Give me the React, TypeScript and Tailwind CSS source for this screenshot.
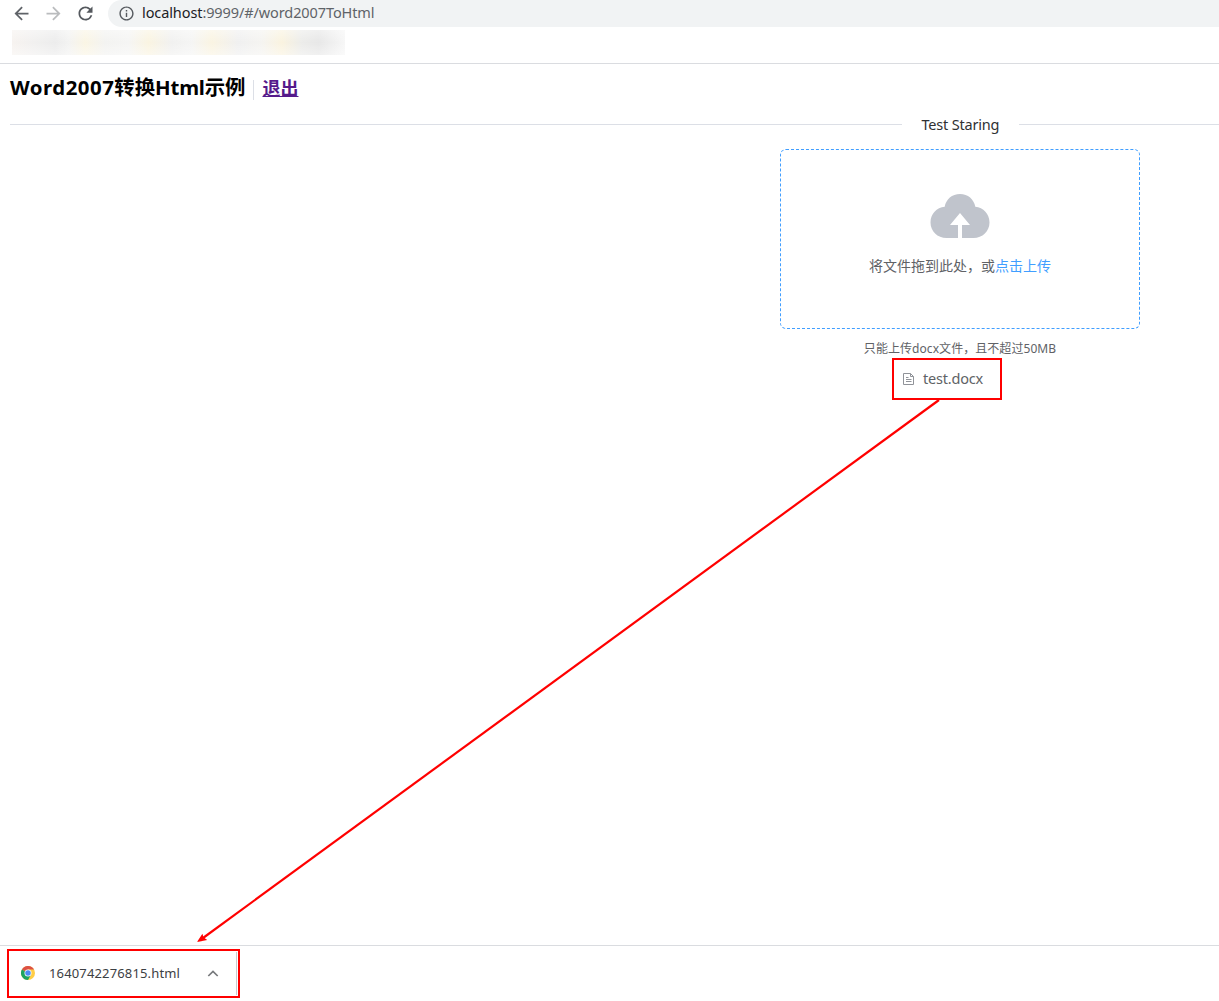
import React from "react";
import { MdArrowBack, MdArrowForward, MdInfoOutline, MdRefresh } from "react-icons/md";

const BrowserBar = () => (
  <header className="h-16 shrink-0 border-b border-[#dadce0]">
    <div className="flex h-[27px] items-center pl-[11px] text-[#5f6368]">
      <MdArrowBack className="mb-px mr-[11px] size-[21px]" />
      <MdArrowForward className="mb-px mr-[11px] size-[21px] text-[#babcbe]" />
      <MdRefresh className="mb-px mr-[12px] size-[21px] text-[#55595e]" />
      <div className="flex h-full flex-1 items-center rounded-bl-[14px] rounded-tl-[14px] bg-[#f1f3f4] pb-px pl-[9.5px]">
        <MdInfoOutline className="mr-[7.5px] size-[17px] text-[#55595e]" />
        <span className="whitespace-nowrap pb-[2px] text-[14.5px] leading-5 tracking-[-0.1px]">
          <span className="text-[#202124]">localhost</span>:9999/#/word2007ToHtml
        </span>
      </div>
    </div>
    <div className="ml-3 mt-[3px] h-[25px] w-[333px] overflow-hidden bg-[linear-gradient(90deg,#f7f3f0_0%,#f1f0ef_7%,#ececec_13%,#f3f3f2_17%,#faf5e4_22%,#f3f3f1_28%,#f5f5f4_35%,#faf4e1_41%,#f1f1f0_48%,#f5f5f4_54%,#faf4e2_60%,#f0f0f0_68%,#f5f4f1_75%,#faf3df_81%,#ececea_87%,#e7e7e7_92%,#f7f7f7_100%)]">
      <div className="h-full bg-linear-to-b from-white/40 via-white/0 to-white/40" />
    </div>
  </header>
);

const UploadPanel = () => (
  <div className="flex h-[180px] w-[360px] flex-col items-center rounded-md border border-dashed border-[#409eff]">
    <svg className="mt-11 h-[45px] w-[60px] shrink-0" viewBox="0 0 60 45" fill="#c0c4cc">
      <path d="M28 44H16.5C7.5 44 .5 37.2 .5 28.5C.5 20 6.6 13.5 14.7 12.8C16 5.3 22 0 30 0C38 0 44 5.3 45.3 12.8C53.4 13.5 59.5 20 59.5 28.5C59.5 37.2 52.5 44 43.5 44H32V31H40L30 19L20 31H28Z" />
    </svg>
    <div className="mt-[17px] text-sm leading-5 text-[#606266]">
      将文件拖到此处，或<em className="not-italic text-[#409eff]">点击上传</em>
    </div>
  </div>
);

const ChromeLogo = () => (
  <svg className="mb-[2px] size-[14px] shrink-0" viewBox="0 0 48 48">
    <circle cx="24" cy="24" r="24" fill="#ffcd46" />
    <path d="M24 24L3.2 12A24 24 0 0 1 44.8 12H24Z" fill="#dd5144" />
    <path d="M3.2 12A24 24 0 0 0 24 48L34.4 30L24 24Z" fill="#1da462" />
    <circle cx="24" cy="24" r="12" fill="#fff" />
    <circle cx="24" cy="24" r="9.5" fill="#4c8bf5" />
  </svg>
);

const DownloadShelf = () => (
  <footer className="flex h-14 shrink-0 items-start border-t border-[#dadce0] pl-[7px] pt-[3px]">
    <div className="flex h-[49px] w-[233px] items-center border-2 border-[#ff0000] pl-3 pr-px">
      <ChromeLogo />
      <span className="ml-[14px] w-[132px] whitespace-nowrap pb-[2px] text-[13px] leading-5 tracking-[0.15px] text-[#3c4043]">1640742276815.html</span>
      <svg className="mb-px ml-[26px] h-[7px] w-[12px] shrink-0" viewBox="0 0 12 7" fill="none" stroke="#77797c" strokeWidth="1.7">
        <path d="M1.3 6L6 1.4L10.7 6" />
      </svg>
      <div className="ml-auto h-[43px] w-px bg-[#c8cacd]" />
    </div>
  </footer>
);

export default function App() {
  return (
    <div className="relative flex h-[1001px] w-full flex-col overflow-hidden bg-white font-['Noto_Sans','Noto_Sans_CJK_SC',sans-serif]">
      <BrowserBar />
      <main className="w-[1900px] flex-1 pl-[10px]">
        <div className="flex h-12 items-center">
          <h1 className="whitespace-nowrap pb-[2px] text-[20.4px] font-bold leading-7 text-black">
            <span className="tracking-[0.5px]">Word2007</span>转换<span className="tracking-[-0.2px]">Html</span>示例
          </h1>
          <span className="ml-2 mt-1 h-5 w-px bg-[#dcdfe6]" />
          <a href="#" className="ml-2 text-lg font-bold leading-6 text-[#551a8b] underline">退出</a>
        </div>
        <div className="flex h-[25px] w-[1900px] items-center">
          <span className="h-px flex-1 bg-[#dcdfe6]" />
          <span className="mx-5 w-[77px] whitespace-nowrap pb-[2px] text-[14.5px] leading-5 tracking-[-0.2px] text-[#303133]">Test Staring</span>
          <span className="h-px flex-1 bg-[#dcdfe6]" />
        </div>
        <div className="flex w-[1900px] flex-col items-center pt-3">
          <UploadPanel />
          <div className="mt-[10px] h-[19px] whitespace-nowrap text-xs leading-[19px] tracking-[0.06px] text-[#606266]">只能上传docx文件，且不超过50MB</div>
          <div className="flex h-[42px] w-[110px] -translate-x-[13px] items-center border-2 border-[#ff0000] pl-[9px]">
            <svg className="size-3 shrink-0" viewBox="0 0 12 12" fill="none" stroke="#909399" strokeWidth="1">
              <path d="M.5 .5H7.5L10.5 3.5V11.5H.5ZM7.5 .5V3.5H10.5M3 4.5H5.5M3 6.5H8.5M3 8.5H8.5" />
            </svg>
            <span className="ml-2 whitespace-nowrap pb-[2px] text-[14.5px] leading-5 tracking-[-0.2px] text-[#606266]">test.docx</span>
          </div>
        </div>
      </main>
      <DownloadShelf />
      <svg className="pointer-events-none absolute left-0 top-0" width="1219" height="1001">
        <path d="M939 400L203 938" stroke="#ff0000" strokeWidth="2.2" />
        <path d="M197 942L202.4 933.8L203.5 937.3L207.2 940Z" fill="#ff0000" />
      </svg>
    </div>
  );
}
